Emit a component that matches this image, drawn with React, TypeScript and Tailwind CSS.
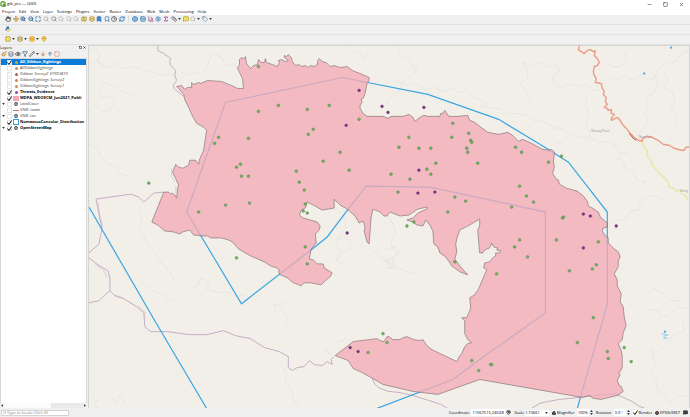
import { useState } from "react"
import type { ReactNode } from "react"
import {
    ArrowDown, ArrowUp, Bookmark, ChartColumn, Clock, Eye, Filter, Hand, Info, Lock, MapPin, Maximize,
    MessageSquare, Move, Paintbrush, Pencil, RefreshCw, Ruler, Search, Settings, Sigma, Square, Table,
    Tag, ZoomIn, ZoomOut, Globe, Minus, X, Layers, Map as MapIcon,
} from "lucide-react"
import type { LucideIcon } from "lucide-react"

const MENUS = [
    "Project", "Edit", "View", "Layer", "Settings", "Plugins", "Vector",
    "Raster", "Database", "Web", "Mesh", "Processing", "Help",
]

type Tool = { name: string; icon: LucideIcon; color: string; menu?: boolean }

const NAV_TOOLS: Tool[] = [
    { name: "Pan Map", icon: Hand, color: "text-[#444444]" },
    { name: "Pan to Selection", icon: Move, color: "text-[#b5861a]" },
    { name: "Zoom In", icon: ZoomIn, color: "text-[#2b5f92]" },
    { name: "Zoom Out", icon: ZoomOut, color: "text-[#2b5f92]" },
    { name: "Zoom Full", icon: Maximize, color: "text-[#1f5fa3]" },
    { name: "Zoom to Selection", icon: Search, color: "text-[#b0b0a8]" },
    { name: "Zoom to Layer", icon: Search, color: "text-[#8a8a8a]" },
    { name: "Zoom to Native Resolution", icon: Search, color: "text-[#b8b8b8]" },
    { name: "Zoom Last", icon: Search, color: "text-[#b8b8b8]" },
    { name: "Zoom Next", icon: Search, color: "text-[#b8b8b8]" },
    { name: "New Map View", icon: MapIcon, color: "text-[#a89a3a] fill-[#f3e9a0]" },
    { name: "New 3D Map View", icon: Layers, color: "text-[#b58d3a] fill-[#f3d890]" },
    { name: "New Bookmark", icon: Bookmark, color: "text-[#1f68b0] fill-[#3f8bd0]" },
    { name: "Show Bookmarks", icon: Bookmark, color: "text-[#4b80b0]" },
    { name: "Temporal Controller", icon: Clock, color: "text-[#555555]" },
    { name: "Refresh", icon: RefreshCw, color: "text-[#1668b0]" },
]

const ATTR_TOOLS: Tool[] = [
    { name: "Identify", icon: Info, color: "text-[#2a6fb0] fill-[#a9cdee]" },
    { name: "Attribute Table", icon: Table, color: "text-[#4a88bd] fill-[#d3e6f6]" },
    { name: "Field Calculator", icon: ChartColumn, color: "text-[#a06080]" },
    { name: "Toolbox", icon: Settings, color: "text-[#3a83bf]" },
    { name: "Statistics", icon: Sigma, color: "text-[#9a1f9a]" },
    { name: "Measure", icon: Ruler, color: "text-[#555555]", menu: true },
    { name: "Map Tips", icon: MessageSquare, color: "text-[#b8a022] fill-[#f5e36a]" },
    { name: "Actions", icon: Search, color: "text-[#b5b5b5]", menu: true },
    { name: "Annotation", icon: Tag, color: "text-[#7d8fa3]", menu: true },
]

const SELECT_TOOLS: Tool[] = [
    { name: "Select Features", icon: Square, color: "text-[#a89a5a] fill-[#f8e060]", menu: true },
    { name: "Select by Value", icon: Layers, color: "text-[#8d8660] fill-[#f6e27a]", menu: true },
    { name: "Deselect", icon: Layers, color: "text-[#d08a1c] fill-[#ffd83a]", menu: true },
    { name: "Select by Location", icon: MapPin, color: "text-[#c29d1c] fill-[#ffe04a]" },
]

const PANEL_TOOLS: Tool[] = [
    { name: "Style", icon: Paintbrush, color: "text-[#c98a2e]" },
    { name: "Add Group", icon: Layers, color: "text-[#6f7a85]" },
    { name: "Themes", icon: Eye, color: "text-[#444444]" },
    { name: "Filter", icon: Filter, color: "text-[#3f6485]" },
    { name: "Expression", icon: Pencil, color: "text-[#666666]", menu: true },
    { name: "Expand All", icon: ArrowDown, color: "text-[#b07c2c]" },
    { name: "Collapse All", icon: ArrowUp, color: "text-[#3e76ad]" },
    { name: "Remove Layer", icon: Square, color: "text-[#d99a8e]" },
]

type Symbol = "green" | "orange" | "red" | "purple" | "pink" | "line" | "group" | "dashed"

type Layer = { name: string; visible: boolean; symbol: Symbol; expand?: boolean; selected?: boolean }

const LAYERS: Layer[] = [
    { name: "All_Gibbon_Sightings", visible: true, symbol: "green", selected: true },
    { name: "AllGibbonSightings", visible: false, symbol: "orange" },
    { name: "Gibbon_Survey2_EPSG3410", visible: false, symbol: "red" },
    { name: "GibbonSightings_Survey2", visible: false, symbol: "orange" },
    { name: "GibbonSightings_Survey1", visible: false, symbol: "orange" },
    { name: "Threats_Evidence", visible: true, symbol: "purple" },
    { name: "WDPA_WDOECM_Jun2021_Publi", visible: true, symbol: "pink" },
    { name: "LandCover", visible: false, symbol: "group", expand: true },
    { name: "VNM_roads", visible: false, symbol: "line" },
    { name: "VNM_cov", visible: false, symbol: "group", expand: true },
    { name: "NomascusConcolor_Distribution", visible: true, symbol: "dashed" },
    { name: "OpenStreetMap", visible: true, symbol: "group", expand: true },
]

const SIGHTINGS = [
    [258, 65], [278, 104], [258, 110], [218, 136], [214, 142], [248, 137], [236, 166], [240, 163], [241, 175],
    [248, 175], [148, 182], [307, 108], [329, 104], [313, 128], [308, 133], [359, 118], [340, 151], [323, 160],
    [349, 169], [296, 170], [299, 181], [409, 136], [399, 146], [419, 147], [431, 147], [453, 122], [452, 136],
    [469, 132], [471, 139], [472, 141], [467, 147], [468, 151], [478, 162], [436, 162], [427, 168], [431, 173],
    [391, 173], [410, 178], [516, 146], [522, 151], [549, 161], [562, 155], [520, 185], [198, 211], [225, 204],
    [249, 202], [236, 257], [304, 189], [305, 203], [303, 210], [307, 212], [305, 246], [307, 263], [398, 191],
    [455, 196], [466, 200], [448, 211], [414, 221], [407, 225], [455, 261], [527, 195], [534, 201], [512, 206],
    [564, 216], [563, 217], [520, 239], [515, 246], [528, 256], [497, 273], [557, 239], [599, 241], [597, 264],
    [593, 268], [570, 270], [594, 317], [383, 333], [387, 342], [368, 352], [472, 360], [479, 370], [578, 342],
    [608, 351], [609, 358], [625, 347], [632, 361], [491, 364], [492, 364],
]

const THREATS = [
    [359, 89], [382, 105], [388, 111], [424, 106], [346, 124], [419, 169], [418, 192], [435, 191],
    [347, 232], [584, 213], [591, 215], [617, 225], [584, 247], [350, 347], [358, 351],
]

const PROTECTED_AREA =
    "M176 85L181 84L184 88L187 86L191 86L191 81L193 83L198 81L200 82L207 79L221 80L231 84L237 87L243 87L242 77L239 71L238 69L237 67L239 63L239 58L241 56L243 57L245 55L246 62L250 67L253 64L257 63L258 58L261 61L264 61L265 57L266 61L272 63L277 65L279 61L278 59L281 58L285 60L288 59L284 56L284 54L286 55L288 53L291 56L292 60L295 64L299 63L301 65L305 64L308 66L310 64L314 65L317 63L318 58L319 57L322 60L326 61L330 65L334 64L340 66L347 65L352 69L360 72L369 76L369 79L367 82L365 92L363 97L361 98L362 101L360 104L360 107L363 112L367 115L373 115L383 115L388 117L391 115L403 115L409 113L413 116L415 120L420 116L424 114L428 115L440 115L441 112L443 112L445 109L449 115L458 115L468 114L470 119L475 121L480 125L488 131L493 132L499 133L508 131L513 134L519 140L523 138L532 142L543 148L550 149L552 148L555 151L554 161L555 166L553 172L557 178L559 179L560 183L567 187L578 190L584 195L588 200L589 205L593 207L599 211L601 216L608 222L608 226L604 227L603 230L606 235L609 237L609 242L615 248L619 251L621 256L619 260L619 266L615 273L618 279L618 285L622 293L621 301L624 306L625 316L627 325L624 332L623 339L619 343L622 350L623 355L623 367L621 371L619 372L621 374L618 380L620 385L622 386L624 391L618 395L610 397L602 399L594 398L590 395L583 397L480 379L438 394L413 391L383 384L371 377L362 372L353 368L348 360L335 355L348 345L353 341L377 338L380 340L384 341L387 336L389 336L393 339L400 339L403 337L407 336L414 339L420 340L423 339L427 345L432 349L457 361L460 355L462 353L465 346L468 343L472 342L468 339L465 333L465 320L462 317L467 317L470 310L471 307L470 297L475 294L479 288L484 276L487 269L484 267L485 262L490 261L493 257L496 255L496 252L500 252L501 250L497 249L498 247L494 246L492 242L490 247L485 249L483 252L480 252L479 241L478 229L480 225L480 218L470 224L460 229L457 238L456 243L457 251L455 258L460 265L468 274L460 271L452 265L446 256L440 252L438 246L434 243L433 230L430 224L426 219L423 225L417 224L413 221L407 219L413 217L418 212L427 208L427 206L418 208L409 214L400 215L395 213L390 211L387 215L384 215L380 211L373 208L371 217L370 231L369 243L367 241L364 230L365 226L363 220L359 222L355 215L347 208L340 204L334 198L334 207L322 209L315 205L307 201L305 207L301 209L299 214L303 217L317 221L320 225L319 229L315 233L316 242L311 248L309 258L313 259L317 263L323 263L324 267L327 269L332 272L330 276L325 280L321 284L310 282L304 282L301 285L293 282L287 277L280 274L278 271L279 269L276 267L270 265L264 261L250 255L238 248L232 241L228 239L221 237L210 237L207 235L203 235L193 234L189 229L182 231L179 233L173 231L164 230L157 224L151 221L163 191L168 191L170 193L172 192L176 197L177 186L178 184L172 171L175 163L178 166L182 167L188 164L189 159L195 159L198 163L199 158L203 149L206 129L203 126L196 122L192 115L188 106L184 98L183 93L178 87Z"

const STREAMS = [
    "M88 60l6 2 3-4 5 7 7 1 4-5 8 5 6 1 7-2 8 4 9 1 10 4 7-2 7 3",
    "M88 108l6-4 9 6 7-2 3-8-5-6-7 2-3-8 6-7 9 4 7 5 12 4",
    "M88 142l8 6 7 12 11 5 6 8 8 2M89 49l6-3 4 8-3 6 5 4",
    "M142 201l-5 8 4 8-2 11 4 6 3 10 9 8 5 9 6 6 6 9 4 7",
    "M181 71l5 3 8-4 6 3 7-9 4-12 9 3 6 9 7-2 5 6",
    "M188 288l9-3 3-8 9 4-4 7 12 4 10-1 9 5 8-2M143 284l9 6 10 4 7 7 5-4",
    "M345 44l7 7 7-2 6 8 3-5M397 44l3 8 10 8 3 6 4-2-2 8-9 5-5 7-3 8-8 5-4 7",
    "M395 78l12 6 9-2 8 6 11-2 9 4 8-3 8 4 7-2 7 7 6 2 8 6",
    "M480 104l12 3 9 0 7 6 8-1 11 2 7 5 10 1 10 6 9 2 7 5",
    "M530 98l-4-9-5-6 7-7 0-8-5-7 9 4 9-4 7 5 9-3 3 7-7 5 2 8 8 3 6-4 8 3 9-2 6 5 8 1",
    "M588 94l-2 10 4 8-3 10 4 10-2 6M605 58l7 7 8 0 7-5-1-9 5-3",
    "M691 49l-9 3-4 7-8 2-8 4-6 8 3 9-4 9-8 5 2 9-3 8 3 7-6 8-5 7",
    "M665 70l4 8-5 7 9 6 3 9-4 8 7 6-4 8 5 6M612 76l9 3 4-5 8 4 9-4 8 5 7-4",
    "M556 142l9-2 8-8 7 4 10 0 9 5 8-1 9 4 5 9 7-2M614 155l9 4 3 8 8 3 4 9 8 1-5 6",
    "M610 223l9-4 8-1 4-8 9-1 1-7 5-5 9-3 8 4",
    "M336 207l7 8 3 13-8 8-2 9 5 6-5 8 9 6M335 240l9-4 8 5-4 8-7 4",
    "M388 215l5 8 3 10-5 8 2 8 6 4-7 6 3 6-8 2 11 0 8 4 8 1 4 5",
    "M386 248l9-2 5 5-7 5-9 4 8 4M371 249l6 3 4 5 9 4",
    "M649 292l7-4 9 6 6 6 9 0 4 5M648 308l11 2 3 7 9-3 8-8 9 2",
    "M690 315l-7 7 3 8-8 3-9 6-4 7-8 6-4-4 1 9 3 9-5 6 5 8 1 9 8 6 5 8 9-8 8 1 7-7 7 2",
    "M280 307l7 9-2 7 6 5M281 365l5 8-1 8 6 9 2 8 5 9M347 332l-4 8-9 2-9 8 6 4",
    "M91 396l5 4-2 6 6 2M110 396l4 7 5-8 5 6-4 6M268 320l8-8-3-9 5 2 9-4",
]

const ROADS = [
    "M157 44v5l6 3 7 5-1 3 1 4 5 5-1 5 2 5-3 4v4l10 8",
    "M163 191l-10 1-10 9-5-5-8-3-35 5 3 15 3 15-3 15-10 9",
    "M88 257l9 7 10 6 2 7v13l-5 4-6 6-10 2",
    "M109 290l5 5 9 3 13 8 7 6 1 14 6 5 17 0 22 3 17 0 17-4 12 5 15 3 14 9 15 4 9 5v11l4 3 5-3 7-1 5-6 5 4 8 1 5-4 5 3-1-5 3-3",
    "M372 378l3 6 5 4 9 3 10 1 14 3 16 5 12 4 7 4",
    "M532 408l8-5 9-2 11-2 20-2 25-3h12l7 3 9 4 7 5 6 2",
]

const SWATCH: Record<Symbol, string> = {
    green: "size-[3px] rounded-full bg-[#b8a868]",
    orange: "size-[3px] rounded-full bg-[#d08a50]",
    red: "size-[3px] rounded-full bg-[#a0604c]",
    purple: "size-[3px] rounded-full bg-[#8a4aa0]",
    pink: "w-[6px] h-[5px] bg-[#f2a9b5]",
    line: "w-[6px] h-px bg-[#c07a84]",
    group: "size-[4px] rounded-full border border-dotted border-[#333333] bg-[#8a9aa5]",
    dashed: "size-[6px] border border-dashed border-[#3a9bd8] bg-white",
}

function ToolButton({ tool }: { tool: Tool }) {
    const Icon = tool.icon
    return (
        <button type="button" aria-label={tool.name} className="flex items-center gap-px">
            <Icon className={`size-[6px] ${tool.color}`} strokeWidth={3} />
            {tool.menu && <Caret />}
        </button>
    )
}

function Caret() {
    return (
        <svg viewBox="0 0 4 3" className="h-[2px] w-[3px]" aria-hidden="true">
            <path d="M0 0h4L2 3z" fill="#333333" />
        </svg>
    )
}

function Toolbar({ children }: { children: ReactNode }) {
    return <div className="flex h-[10px] shrink-0 items-center gap-[3px] border-b border-[#e2e2e2] pb-px pl-[5px]">{children}</div>
}

function Grip() {
    return <span className="h-[6px] w-px shrink-0 bg-[#dcdcdc]" />
}

function Tick({ className }: { className?: string }) {
    return (
        <svg viewBox="0 0 10 10" className={`pointer-events-none col-start-1 row-start-1 size-[5px] ${className ?? ""}`} aria-hidden="true">
            <path d="M1 5l3 4 5-8" fill="none" stroke="#111111" strokeWidth="2" />
        </svg>
    )
}

function LayerRow({ layer }: { layer: Layer }) {
    const [visible, setVisible] = useState(layer.visible)

    return (
        <li className={`h-[6px] ${layer.selected ? "bg-[#0b7bd8]" : ""}`}>
            <label className="flex h-full items-center gap-px pl-px">
                <span className="flex w-[3px] shrink-0 justify-center">{layer.expand && <Caret />}</span>
                <span className="ml-px grid shrink-0">
                    <input
                        type="checkbox"
                        checked={visible}
                        onChange={() => setVisible(!visible)}
                        className="peer col-start-1 row-start-1 size-[5px] appearance-none border border-[#e4e4e4] bg-white"
                    />
                    <Tick className="hidden peer-checked:block" />
                </span>
                <span className="flex w-[6px] shrink-0 items-center justify-center">
                    <span className={SWATCH[layer.symbol]} />
                </span>
                <span
                    className={`whitespace-nowrap ${
                        layer.selected
                            ? "font-bold text-white"
                            : layer.visible
                              ? "font-bold text-black"
                              : "italic text-[#444444]"
                    }`}
                >
                    {layer.name}
                </span>
            </label>
        </li>
    )
}

function MapCanvas() {
    return (
        <svg
            viewBox="88 44 602 364"
            preserveAspectRatio="xMidYMid slice"
            className="absolute inset-0 size-full bg-[#f2efe9]"
            role="img"
            aria-label="Map of gibbon sightings"
        >
            <g fill="none" stroke="#dddfe0" strokeWidth="0.6" strokeLinejoin="round">
                {STREAMS.map((d) => <path key={d} d={d} />)}
            </g>

            {/* Roads */}
            <g fill="none" stroke="#c4aec4" strokeWidth="1" strokeLinejoin="round">
                {ROADS.map((d) => <path key={d} d={d} />)}
                <path d="M97 201l2 14 3 11M94 263l9 7 3 7M113 294l9 3M137 305l7 6v8M171 167l0 8 3 6M175 185l0 10" strokeWidth="0.5" />
            </g>
            <path
                d="M643 140l2 6 3 3v6l4 4 1 5 5 5 3 4 5 4 3 4 1 5 4 1 3 3 4-1 2 4 3 1 3 5"
                fill="none"
                stroke="#e6e69c"
                strokeWidth="1.2"
            />
            <path
                d="M580 44l-1 4 3 2 3 2 3-3 3-1 3 2 2-1-1 5 3 3 2 4-2 3-3 1-1 5 1 4 2 3-1 4 6 1 1 5 2 3-1 3 3 3-1 4 2 3-3 3 3 1 1 2 3-1v4l3 1-3 4v2l4-2 2-1 3 3 2 4 4 4 4 5 4 4 4 3 4 1 1-3 4-2 5 1 6 3 5 4 6 1 5 3 7 2 3 0 2-3 4 0"
                fill="none"
                stroke="#ec9c86"
                strokeWidth="1.4"
                strokeLinejoin="round"
            />
            <path d="M630 132l4 5 3 2" fill="none" stroke="#a2523c" strokeWidth="1" />

            {/* Species distribution, drawn beneath the protected area */}
            <g fill="none" stroke="#3aa6e4" strokeWidth="1.2">
                <path d="M578 408L581 397L608 304V211L587 184L569 161L547 147L499 118L428 93L342 76L225 101L186 211L241 303L312 248L327 236L348 208L366 185L430 186L546 211V312L480 359L453 379L377 408" />
                <path d="M88 206L154 320L206 408" />
            </g>

            <path d={PROTECTED_AREA} fill="#f3abb6" fillOpacity="0.78" stroke="#77686c" strokeWidth="0.6" strokeLinejoin="round" />

            <g fill="#66b85c" stroke="#56744f" strokeWidth="0.4">
                {SIGHTINGS.map(([x, y]) => <circle key={`${x}-${y}`} cx={x} cy={y} r="1.4" />)}
            </g>
            <g fill="#7d3692" stroke="#4c3455" strokeWidth="0.4">
                {THREATS.map(([x, y]) => <circle key={`${x}-${y}`} cx={x} cy={y} r="1.4" />)}
            </g>

            <g fill="#4ca9e6">
                <rect x="644" y="71" width="2" height="2" />
                <rect x="671" y="45" width="2" height="2" />
                <rect x="665" y="330" width="2" height="2" />
            </g>
            <g fontFamily="Noto Sans, sans-serif" fontSize="3" fill="#999999" textAnchor="middle">
                <text x="601" y="131">Muang Poun</text>
                <text x="646" y="137">Nam Can</text>
                <text x="685" y="191">Xieng</text>
                <text x="666" y="335" fill="#4ca9e6">Thac</text>
                <text x="666" y="338" fill="#4ca9e6">Xa</text>
            </g>
        </svg>
    )
}

function Spinner() {
    return (
        <span className="flex flex-col gap-px">
            <svg viewBox="0 0 4 3" className="h-[2px] w-[3px]" aria-hidden="true"><path d="M0 3h4L2 0z" fill="#333333" /></svg>
            <Caret />
        </span>
    )
}

function StatusField({ label, value, width, children }: { label: string; value: string; width: string; children?: ReactNode }) {
    return (
        <span className="flex items-center gap-px">
            <label className="flex items-center gap-[2px]">
                {label}
                <input defaultValue={value} className={`h-[7px] bg-white px-px ${width}`} />
            </label>
            {children}
        </span>
    )
}

export default function App() {
    return (
        <div className="flex h-screen flex-col overflow-hidden bg-[#f0f0f0] font-['Open_Sans','Noto_Sans',sans-serif] text-[4px] leading-[6px] text-black">
            <header className="flex h-2 shrink-0 items-center justify-between bg-white pr-[6px]">
                <h1 className="flex items-center gap-px">
                    <svg viewBox="0 0 12 12" className="size-[6px]" aria-hidden="true">
                        <circle cx="6" cy="6" r="4.5" fill="none" stroke="#65a52e" strokeWidth="2.6" />
                        <path d="M6 6l5 5" stroke="#3f7d1c" strokeWidth="2.4" />
                    </svg>
                    gib_pro — QGIS
                </h1>
                <div className="flex gap-[11px]">
                    <button type="button" aria-label="Minimize"><Minus className="size-[5px]" /></button>
                    <button type="button" aria-label="Maximize"><Square className="size-[5px]" /></button>
                    <button type="button" aria-label="Close"><X className="size-[5px]" /></button>
                </div>
            </header>

            <nav className="flex h-[7px] shrink-0 items-center gap-[4px] bg-white pl-[2px]">
                {MENUS.map((menu) => <button key={menu} type="button">{menu}</button>)}
            </nav>

            <Toolbar>
                <div className="flex w-[120px] justify-between">
                    {NAV_TOOLS.map((tool) => <ToolButton key={tool.name} tool={tool} />)}
                </div>
                <Grip />
                <div className="flex w-[80px] justify-between">
                    {ATTR_TOOLS.map((tool) => <ToolButton key={tool.name} tool={tool} />)}
                </div>
            </Toolbar>
            <Toolbar>
                <button type="button" aria-label="Python Console">
                    <svg viewBox="0 0 12 12" className="size-[6px]" aria-hidden="true">
                        <path d="M3 1h5v5H4v3H1V5h2z" fill="#3a76a8" />
                        <path d="M9 11H4V7h4V4h3v4z" fill="#f2cf45" />
                    </svg>
                </button>
            </Toolbar>
            <Toolbar>
                <div className="flex gap-[2px]">
                    {SELECT_TOOLS.map((tool) => <ToolButton key={tool.name} tool={tool} />)}
                </div>
            </Toolbar>

            <main className="flex min-h-0 flex-1">
                <aside className="flex w-[87px] shrink-0 flex-col">
                    <div className="flex h-[5px] shrink-0 items-center justify-between pr-px">
                        <h2>Layers</h2>
                        <span className="flex gap-px">
                            <button type="button" aria-label="Float panel"><Square className="size-[3px]" strokeWidth={4} /></button>
                            <button type="button" aria-label="Close panel"><X className="size-[3px]" strokeWidth={4} /></button>
                        </span>
                    </div>
                    <div className="flex h-2 shrink-0 items-center gap-px pl-px">
                        {PANEL_TOOLS.map((tool) => <ToolButton key={tool.name} tool={tool} />)}
                    </div>
                    <ul className="min-h-0 flex-1 border border-b-0 border-[#d8d8d8] bg-white">
                        {LAYERS.map((layer) => <LayerRow key={layer.name} layer={layer} />)}
                    </ul>
                    <div className="flex h-[5px] shrink-0 items-center gap-px px-px">
                        <svg viewBox="0 0 3 4" className="h-[3px] w-[2px]" aria-hidden="true"><path d="M3 0v4L0 2z" fill="#333333" /></svg>
                        <span className="h-full flex-1 bg-[#e9e9e9]"><span className="block h-full w-3/5 bg-[#fbfbfb]" /></span>
                        <svg viewBox="0 0 3 4" className="h-[3px] w-[2px]" aria-hidden="true"><path d="M0 0v4l3-2z" fill="#333333" /></svg>
                    </div>
                </aside>
                <section className="relative ml-px flex-1 overflow-hidden border border-b-0 border-[#d4d4d4]">
                    <MapCanvas />
                </section>
            </main>

            <footer className="flex h-[9px] shrink-0 items-center justify-between pr-[2px] pl-px">
                <label className="flex h-[6px] w-[68px] items-center gap-px border border-[#d4d4d4] bg-white pl-px">
                    <Search className="size-[3px] shrink-0 text-[#777777]" />
                    <input aria-label="Locate" placeholder="Type to locate (Ctrl+K)" className="min-w-0 flex-1 placeholder:text-[#777777]" />
                </label>
                <div className="flex items-center gap-[3px]">
                    <StatusField label="Coordinate" value="11567515,2404369" width="w-[34px]">
                        <MapPin className="size-[5px]" strokeWidth={3} />
                    </StatusField>
                    <label className="flex items-center gap-px">
                        Scale
                        <span className="flex items-center bg-white pr-px">
                            <select className="w-[20px] appearance-none bg-white"><option>1:70661</option></select>
                            <Caret />
                        </span>
                    </label>
                    <span className="flex items-center gap-px">
                        <Lock className="size-[4px] fill-[#666666]" strokeWidth={3} />
                        <StatusField label="Magnifier" value="100%" width="w-[12px]"><Spinner /></StatusField>
                    </span>
                    <StatusField label="Rotation" value="0.0 °" width="w-[12px]"><Spinner /></StatusField>
                    <label className="flex items-center gap-px">
                        <span className="grid">
                            <input type="checkbox" defaultChecked className="peer col-start-1 row-start-1 size-[5px] appearance-none bg-white" />
                            <Tick className="hidden peer-checked:block" />
                        </span>
                        Render
                    </label>
                    <button type="button" className="flex items-center gap-px"><Globe className="size-[4px]" strokeWidth={3} />EPSG:3857</button>
                    <button type="button" aria-label="Messages"><MessageSquare className="size-[5px] fill-[#444444]" /></button>
                </div>
            </footer>
        </div>
    )
}
